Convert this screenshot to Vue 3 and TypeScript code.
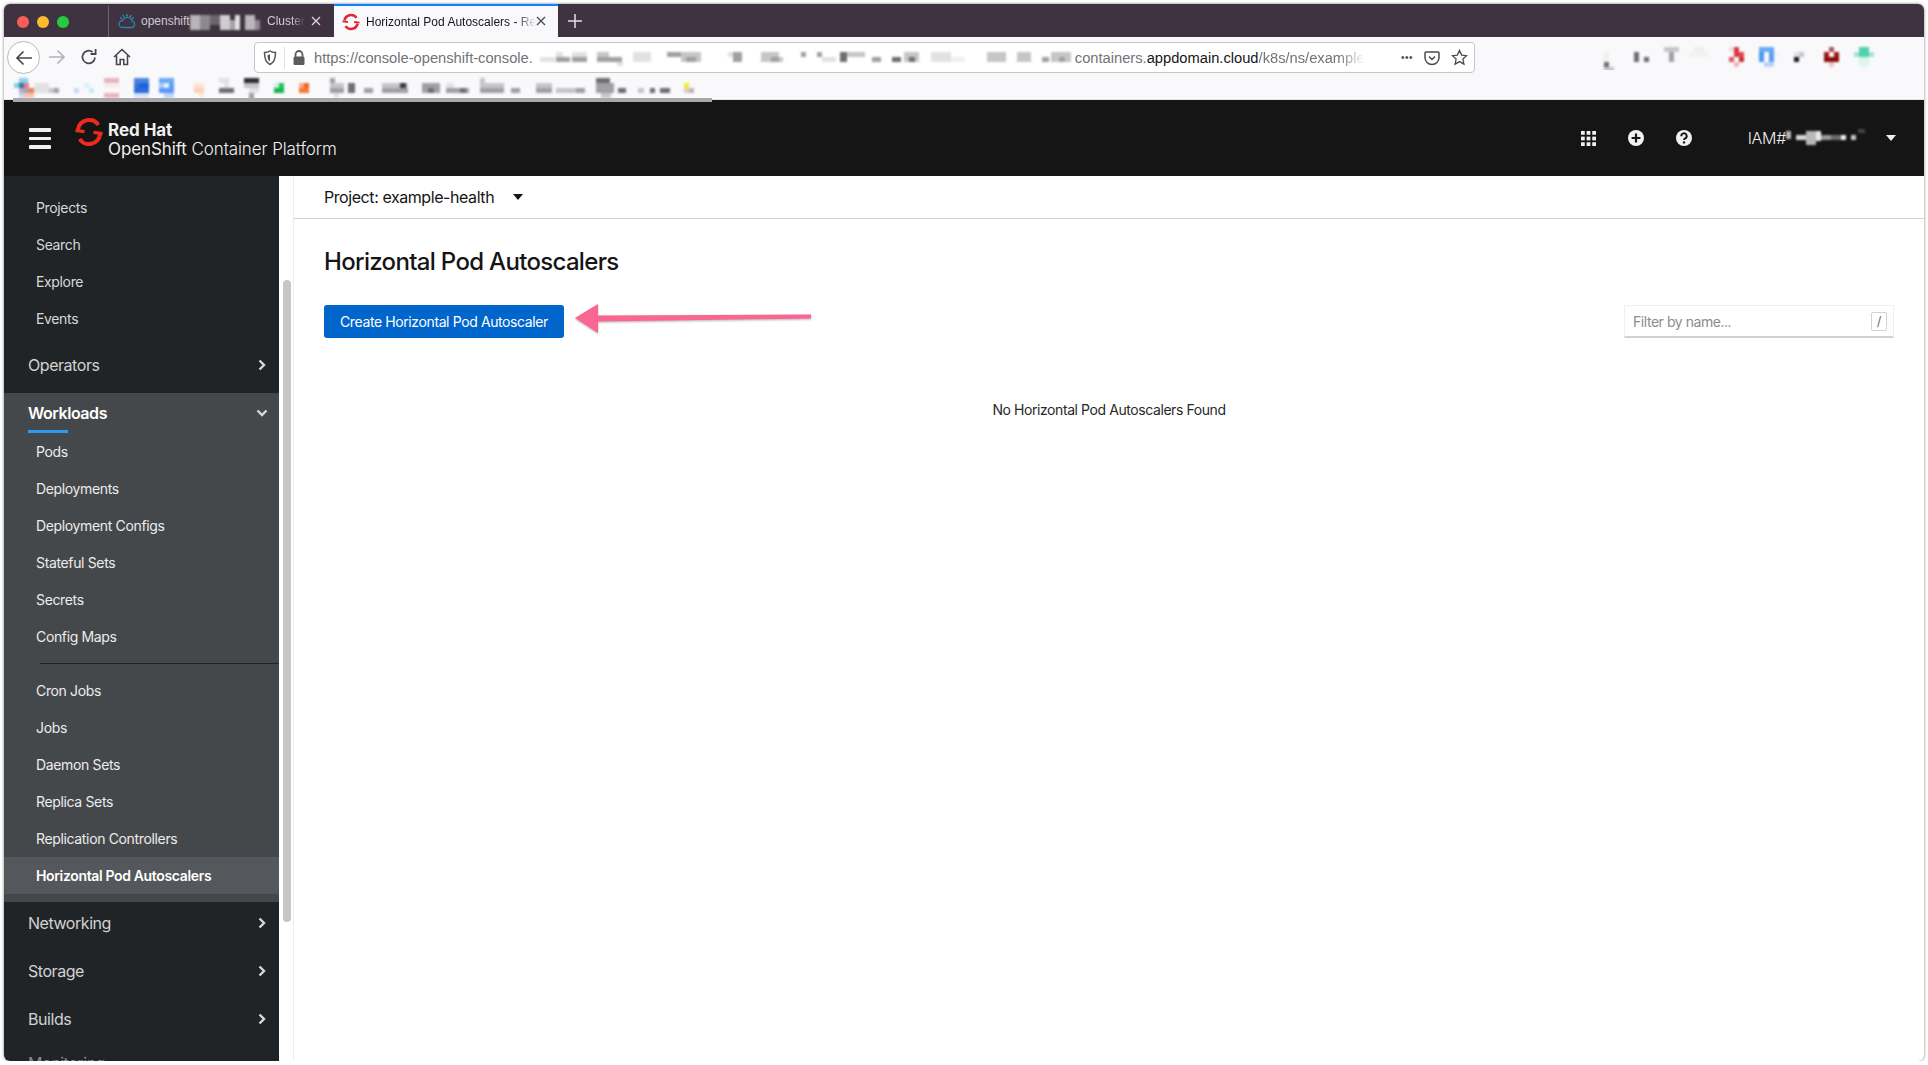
<script setup lang="ts">
type Cell = [number, number, number, number, string]

const topItems = ['Projects', 'Search', 'Explore', 'Events']
const groupOne = ['Pods', 'Deployments', 'Deployment Configs', 'Stateful Sets', 'Secrets', 'Config Maps']
const groupTwo = ['Cron Jobs', 'Jobs', 'Daemon Sets', 'Replica Sets', 'Replication Controllers']
const lowerSections = ['Networking', 'Storage', 'Builds']

const g0 = '#f0f0f1'
const g1 = '#e2e2e4'
const g2 = '#c6c6c8'
const g3 = '#a0a0a3'
const g4 = '#6f6f72'

const bookmarkCells: Cell[] = [
  [19, 78, 9, 5, '#8ccfe8'], [14, 83, 5, 5, '#86cdec'], [19, 83, 5, 5, '#3f7697'], [24, 83, 5, 5, '#e2838f'],
  [19, 88, 5, 5, '#b8a8c4'], [24, 88, 5, 5, '#aca0bc'], [29, 88, 5, 5, '#f0824e'], [19, 93, 5, 5, '#c8dce8'],
  [24, 93, 10, 5, '#f8c4ac'], [34, 83, 15, 5, g1], [34, 88, 15, 5, g1], [49, 88, 5, 5, g2], [54, 88, 5, 5, g3],
  [74, 88, 5, 5, '#c8d8f8'], [84, 83, 5, 5, '#d8f0f8'], [89, 88, 5, 5, '#c8e8f8'],
  [104, 78, 15, 5, '#e6b6be'], [104, 83, 15, 5, '#f8ecec'], [104, 93, 15, 5, '#e6b6be'],
  [134, 78, 15, 5, '#4c82e2'], [134, 83, 5, 5, '#3d74dc'], [139, 83, 10, 5, '#1e62d8'], [134, 88, 15, 5, '#2f6cd8'], [134, 93, 15, 5, '#d8e2f8'],
  [159, 78, 15, 5, '#6aa8f8'], [159, 83, 5, 5, '#a8ccfc'], [164, 83, 5, 5, '#e8f2ff'], [169, 83, 5, 5, '#5a9cf6'],
  [159, 88, 15, 5, '#5898f8'], [164, 93, 10, 5, '#bcd2fc'],
  [194, 83, 10, 5, '#fde4d6'], [194, 88, 10, 5, '#fccfb8'], [199, 93, 5, 5, '#fde8dc'],
  [219, 78, 10, 5, g1], [224, 83, 5, 5, g1], [219, 88, 15, 5, g4], [244, 78, 15, 5, '#2e2e30'],
  [244, 83, 15, 5, g2], [249, 88, 10, 5, g1], [249, 93, 5, 5, g3], [249, 98, 5, 5, g3],
  [274, 83, 5, 5, '#cfeedd'], [279, 83, 5, 5, '#27c060'], [274, 88, 10, 5, '#10b850'],
  [299, 83, 5, 5, '#f8a890'], [304, 83, 5, 5, '#f06030'], [299, 88, 10, 5, '#f67a2c'],
  [330, 78, 5, 5, g3], [330, 83, 14, 5, g2], [330, 88, 14, 5, g3], [334, 93, 5, 5, g1],
  [348, 83, 7, 10, g4], [364, 88, 9, 5, g3], [382, 83, 26, 5, g2], [382, 88, 26, 5, g3], [400, 83, 6, 5, '#3a3a3c'],
  [422, 83, 18, 10, g3], [428, 88, 6, 5, g4], [446, 83, 8, 5, g1], [446, 88, 23, 5, g3], [460, 88, 6, 5, g4],
  [480, 78, 5, 5, g2], [480, 83, 24, 5, g2], [480, 88, 24, 5, g3], [511, 88, 9, 5, g3],
  [536, 83, 16, 5, g2], [536, 88, 16, 5, g3], [556, 88, 20, 5, g2], [576, 88, 9, 5, g3],
  [596, 78, 14, 5, g4], [596, 83, 18, 5, g3], [596, 88, 18, 5, g3], [601, 93, 10, 5, g2],
  [618, 88, 8, 5, g4], [638, 88, 6, 5, g2], [650, 88, 5, 5, g4], [660, 88, 10, 5, g4],
  [684, 83, 5, 5, '#f8ec28'], [684, 88, 5, 5, '#d8d0c8'], [689, 88, 5, 5, '#c0b0c0'],
]

const tabCells: Cell[] = [
  [0, 4, 10, 15, '#b8b4ba'], [10, 4, 10, 15, '#8d8890'], [20, 4, 10, 10, '#6c6570'], [30, 4, 10, 15, '#cfccd0'],
  [40, 9, 5, 10, '#a5a1a7'], [45, 4, 5, 15, '#e2e0e3'], [55, 4, 10, 15, '#bab6bc'], [65, 9, 5, 10, '#8d8890'],
]

const urlCells: Cell[] = [
  [1, 7, 15, 5, g1], [17, 2, 7, 5, g1], [17, 7, 14, 5, g3], [33, 2, 15, 5, g1], [33, 7, 15, 5, g3],
  [58, 2, 12, 5, g2], [58, 7, 25, 5, g3], [78, 12, 6, 4, g1], [94, 2, 18, 10, g1],
  [128, 2, 14, 5, g3], [142, 2, 20, 10, g2], [147, 7, 10, 5, g3],
  [189, 2, 5, 5, g1], [194, 2, 9, 10, g3], [222, 2, 18, 5, g2], [222, 7, 22, 5, g2], [232, 7, 8, 5, g3],
  [262, 2, 5, 5, g3], [278, 2, 5, 5, g3], [283, 7, 14, 5, g1], [301, 2, 7, 10, g4], [308, 2, 18, 5, g2], [333, 7, 9, 5, g3],
  [353, 7, 9, 5, g4], [365, 2, 15, 10, g2], [370, 7, 6, 5, g4], [392, 2, 20, 10, g1], [412, 7, 14, 5, g0],
  [448, 2, 19, 10, g2], [478, 2, 14, 10, g2], [503, 7, 7, 5, g3], [512, 2, 20, 10, g2], [520, 7, 6, 5, g3],
]

const extensionCells: Cell[] = [
  [3, 5, 5, 10, g0], [3, 10, 5, 5, g0], [3, 15, 5, 5, g4], [3, 20, 10, 5, g2],
  [33, 5, 5, 10, g4], [43, 10, 5, 5, g4], [63, 0, 15, 5, g2], [68, 5, 5, 10, g3],
  [93, 0, 10, 5, '#eeeeee'], [88, 5, 20, 5, '#f2f2f2'],
  [128, 0, 5, 5, '#f8dcdc'], [133, 0, 5, 10, '#d63a40'], [138, 5, 5, 5, '#e0484e'], [128, 10, 5, 5, '#d85860'], [138, 10, 5, 5, '#cc2c30'], [133, 15, 5, 5, '#e8b8b8'],
  [158, 0, 15, 5, '#6aa8f8'], [158, 5, 5, 10, '#4d94f4'], [168, 5, 5, 10, '#5c9cf6'], [163, 15, 10, 5, '#bcd2fc'], [173, 5, 5, 5, '#eef4fe'],
  [193, 5, 5, 5, g1], [198, 5, 5, 5, g2], [193, 10, 5, 5, '#1c1c1e'],
  [228, 0, 5, 5, '#a65a5a'], [223, 5, 5, 5, '#a01818'], [233, 5, 5, 5, '#a01818'], [223, 10, 15, 5, '#8c0f0f'], [228, 15, 5, 5, '#e8c8c8'],
  [258, 0, 10, 5, '#52d0ae'], [253, 5, 5, 5, '#a6e4d2'], [258, 5, 10, 5, '#52d0ae'], [268, 5, 5, 5, '#a6e4d2'], [258, 10, 10, 10, '#e0f4ee'],
]

const userCells: Cell[] = [
  [0, 2, 5, 8, '#b8b8b8'], [10, 6, 10, 5, '#d8d8d8'], [20, 2, 10, 14, '#b8b8b8'], [30, 2, 5, 10, '#e8e8e8'],
  [35, 6, 10, 5, '#9a9a9a'], [45, 6, 10, 5, '#6c6c6c'], [55, 6, 5, 5, '#f0f0f0'], [65, 6, 5, 5, '#c8c8c8'], [72, 0, 7, 4, '#444444'],
]
</script>

<template>
  <div class="window">
    <header class="tabbar">
      <div class="lights">
        <span class="light red"></span>
        <span class="light amber"></span>
        <span class="light green"></span>
      </div>
      <div class="tab idle">
        <svg class="cloud" viewBox="0 0 18 16" width="18" height="16" fill="none" stroke="#2f7fa8" stroke-width="1.3">
          <path d="M4.5 14.5h9a3.2 3.2 0 0 0 .6-6.3A5 5 0 0 0 4.6 7.5 3.5 3.5 0 0 0 4.5 14.5z" />
          <path d="M9 1v2.5M5 2l1 2M13 2l-1 2M2.5 4.5l1.3 1.2M15.5 4.5l-1.3 1.2" stroke="#3f95c0" />
        </svg>
        <span class="tab-text idle-text">openshift</span>
        <svg class="mosaic tab-mosaic" width="72" height="20" viewBox="0 0 72 20">
          <rect v-for="(c, i) in tabCells" :key="i" :x="c[0]" :y="c[1]" :width="c[2]" :height="c[3]" :fill="c[4]" />
        </svg>
        <span class="tab-text idle-text cluster">Cluster</span>
        <svg class="close" viewBox="0 0 12 12" width="12" height="12" stroke="#d8d4da" stroke-width="1.3"><path d="M2 2l8 8M10 2l-8 8" /></svg>
      </div>
      <div class="tab active">
        <svg class="favicon" viewBox="0 0 20 20" width="18" height="18" fill="none" stroke="#e1262d" stroke-width="2.8">
          <path d="M2.600 8.200A7.600 7.600 0 0 1 16.200 5.400" />
          <path d="M17.400 11.800A7.600 7.600 0 0 1 3.800 14.600" />
          <path d="M0.500 9.300l6 .8M19.500 10.700l-6-.8" stroke-width="2.200" />
        </svg>
        <span class="tab-text active-text">Horizontal Pod Autoscalers - Re</span>
        <svg class="close" viewBox="0 0 12 12" width="12" height="12" stroke="#4a4a4f" stroke-width="1.3"><path d="M2 2l8 8M10 2l-8 8" /></svg>
      </div>
      <svg class="newtab" viewBox="0 0 14 14" width="14" height="14" stroke="#e4e0e6" stroke-width="1.5"><path d="M7 0v14M0 7h14" /></svg>
    </header>

    <div class="toolbar">
      <div class="back">
        <svg viewBox="0 0 18 18" width="18" height="18" fill="none" stroke="#48484c" stroke-width="1.7"><path d="M17 9H2M8.5 2.5L2 9l6.5 6.5" /></svg>
      </div>
      <svg class="tool forward" viewBox="0 0 18 18" width="18" height="18" fill="none" stroke="#b4b4b8" stroke-width="1.7"><path d="M1 9h15M9.5 2.5L16 9l-6.5 6.5" /></svg>
      <svg class="tool reload" viewBox="0 0 18 18" width="18" height="18" fill="none" stroke="#48484c" stroke-width="1.8"><path d="M15 9.5A6.3 6.3 0 1 1 12.6 4" /><path d="M15.6 1v5h-5" /></svg>
      <svg class="tool home" viewBox="0 0 18 18" width="18" height="18" fill="none" stroke="#48484c" stroke-width="1.6"><path d="M1 9l8-7.5L17 9M3.5 7.5V16.5H7.2V11.5h3.6v5h3.7V7.5" /></svg>
      <div class="urlbar">
        <svg viewBox="0 0 14 16" width="14" height="16" fill="none" stroke="#55555a" stroke-width="1.5"><path d="M1.5 2.5C4 2.5 5.5 2 7 1c1.5 1 3 1.5 5.5 1.5 0 6-1 10-5.500 12C2.500 12.500 1.500 8.500 1.500 2.500z" /><path d="M4.500 5c1 0 1.800-.3 2.500-.8v7.300C5 10.500 4.500 8 4.500 5z" fill="#55555a" stroke="none" /></svg>
        <span class="url-sep"></span>
        <svg viewBox="0 0 14 16" width="14" height="16"><path d="M3.500 7V4.500a3.500 3.500 0 0 1 7 0V7" fill="none" stroke="#5c5c60" stroke-width="1.800" /><rect x="1.500" y="6.500" width="11" height="8.500" rx="1.500" fill="#5c5c60" /></svg>
        <span class="url-a url-start">https://console-openshift-console.</span>
        <svg class="mosaic url-mosaic" width="536" height="16" viewBox="0 0 536 16">
          <rect v-for="(c, i) in urlCells" :key="i" :x="c[0]" :y="c[1]" :width="c[2]" :height="c[3]" :fill="c[4]" />
        </svg>
        <span class="url-a">containers.</span><span class="url-b">appdomain.cloud</span><span class="url-a fade">/k8s/ns/example</span>
        <span class="dots">•••</span>
        <svg class="pocket" viewBox="0 0 16 16" width="16" height="16" fill="none" stroke="#4c4c50" stroke-width="1.500"><path d="M2 2h12a1 1 0 0 1 1 1v4.500a7 7 0 0 1-14 0V3a1 1 0 0 1 1-1z" /><path d="M5 6.500l3 3 3-3" /></svg>
        <svg class="star" viewBox="0 0 18 18" width="17" height="17" fill="none" stroke="#4c4c50" stroke-width="1.400"><path d="M9 1.500l2.300 5 5.200.6-3.900 3.600 1.100 5.300L9 13.300 4.300 16l1.100-5.300L1.500 7.100l5.200-.6z" /></svg>
      </div>
      <svg class="mosaic extensions" width="275" height="26" viewBox="0 0 275 26">
        <rect v-for="(c, i) in extensionCells" :key="i" :x="c[0]" :y="c[1]" :width="c[2]" :height="c[3]" :fill="c[4]" />
      </svg>
    </div>

    <div class="bookmarks">
      <svg class="mosaic bm" width="712" height="32" viewBox="0 68 712 32">
        <rect v-for="(c, i) in bookmarkCells" :key="i" :x="c[0]" :y="c[1]" :width="c[2]" :height="c[3]" :fill="c[4]" />
      </svg>
      <span class="bm-rule"></span>
    </div>

    <div class="masthead">
      <span class="burger"><i></i><i></i><i></i></span>
      <svg class="logo" viewBox="0 0 28 28" width="28" height="28" fill="none" stroke="#ee2a1f" stroke-width="4">
        <path d="M3 11.500A11.200 11.200 0 0 1 23.400 7" />
        <path d="M25 16.500A11.200 11.200 0 0 1 4.600 21" />
        <path d="M0.500 12.300l9 1.300M27.500 15.700l-9-1.300" stroke-width="3.200" />
      </svg>
      <div class="brand">
        <div class="brand-top">Red Hat</div>
        <div class="brand-bottom"><b>OpenShift</b> Container Platform</div>
      </div>
      <div class="mast-right">
        <svg viewBox="0 0 16 16" width="15" height="15" fill="#f0f0f0">
          <rect x="0" y="0" width="4" height="4" /><rect x="6" y="0" width="4" height="4" /><rect x="12" y="0" width="4" height="4" />
          <rect x="0" y="6" width="4" height="4" /><rect x="6" y="6" width="4" height="4" /><rect x="12" y="6" width="4" height="4" />
          <rect x="0" y="12" width="4" height="4" /><rect x="6" y="12" width="4" height="4" /><rect x="12" y="12" width="4" height="4" />
        </svg>
        <svg viewBox="0 0 16 16" width="16" height="16"><circle cx="8" cy="8" r="8" fill="#f0f0f0" /><path d="M8 3.600v8.800M3.600 8h8.800" stroke="#151515" stroke-width="2.200" /></svg>
        <svg viewBox="0 0 16 16" width="16" height="16"><circle cx="8" cy="8" r="8" fill="#f0f0f0" /><path d="M5.300 6.200A2.700 2.700 0 1 1 9 8.500c-.7.400-1 .8-1 1.600" fill="none" stroke="#151515" stroke-width="1.900" /><circle cx="8" cy="12.400" r="1.200" fill="#151515" /></svg>
        <div class="user">
          <span>IAM#</span>
          <svg class="mosaic" width="80" height="18" viewBox="0 0 80 18">
            <rect v-for="(c, i) in userCells" :key="i" :x="c[0]" :y="c[1]" :width="c[2]" :height="c[3]" :fill="c[4]" />
          </svg>
        </div>
        <span class="caret light-caret"></span>
      </div>
    </div>

    <div class="body">
      <nav class="sidebar">
        <div class="top-list">
          <a v-for="item in topItems" :key="item" class="sub">{{ item }}</a>
        </div>
        <div class="section operators">
          <span>Operators</span>
          <svg class="chev" viewBox="0 0 10 12" width="10" height="12" fill="none" stroke="currentColor" stroke-width="2.400"><path d="M2.500 1.500L7 6l-4.500 4.500" /></svg>
        </div>
        <div class="group">
          <div class="group-head">
            <span class="group-title">Workloads</span>
            <svg class="chev down" viewBox="0 0 12 10" width="12" height="10" fill="none" stroke="currentColor" stroke-width="2.400"><path d="M1.500 2.500L6 7l4.500-4.500" /></svg>
          </div>
          <a v-for="item in groupOne" :key="item" class="sub">{{ item }}</a>
          <div class="divider"></div>
          <a v-for="item in groupTwo" :key="item" class="sub">{{ item }}</a>
          <a class="sub current">Horizontal Pod Autoscalers</a>
        </div>
        <div v-for="s in lowerSections" :key="s" class="section lower">
          <span>{{ s }}</span>
          <svg class="chev" viewBox="0 0 10 12" width="10" height="12" fill="none" stroke="currentColor" stroke-width="2.400"><path d="M2.500 1.500L7 6l-4.500 4.500" /></svg>
        </div>
        <div class="section clipped"><span>Monitoring</span></div>
      </nav>
      <div class="scroll-track"><div class="scroll-thumb"></div></div>

      <main class="main">
        <div class="project-bar">
          <span>Project: example-health</span>
          <span class="caret dark-caret"></span>
        </div>
        <div class="page">
          <h1>Horizontal Pod Autoscalers</h1>
          <div class="actions">
            <button class="create" type="button">Create Horizontal Pod Autoscaler</button>
            <svg class="arrow" viewBox="0 0 244 36" width="244" height="36">
              <path d="M2 15L25 1v11.500L238 11.500v4L25 18.500V30z" fill="#fa6592" />
            </svg>
            <div class="filter">
              <span class="placeholder">Filter by name...</span>
              <span class="slash">/</span>
            </div>
          </div>
          <p class="empty">No Horizontal Pod Autoscalers Found</p>
        </div>
      </main>
    </div>
  </div>
</template>

<style scoped>
.window {
  width: 1920px;
  height: 1057px;
  margin: 4px 4px 0;
  display: flex;
  flex-direction: column;
  border-radius: 6px;
  overflow: hidden;
  background: #fff;
  box-shadow: 0 0 3px rgba(0, 0, 0, 0.55);
  font-family: Inter, "Noto Sans", sans-serif;
}
.mosaic {
  display: block;
  flex: none;
  filter: blur(0.8px);
}
.tabbar {
  height: 33px;
  flex: none;
  display: flex;
  align-items: stretch;
  background: #3f3341;
  font-family: "Liberation Sans", Arial, sans-serif;
}
.lights {
  width: 105px;
  display: flex;
  align-items: center;
  gap: 8px;
  padding-left: 13px;
  box-sizing: border-box;
  border-right: 1px solid #6d6370;
  margin: 2px 0 0;
  flex: none;
}
.light {
  width: 12px;
  height: 12px;
  border-radius: 50%;
}
.red { background: #fc5c57; }
.amber { background: #fdbc2e; }
.green { background: #28c940; }
.tab {
  width: 224px;
  flex: none;
  display: flex;
  align-items: center;
  box-sizing: border-box;
  position: relative;
  padding-left: 9px;
  font-size: 12px;
}
.tab.idle { width: 225px; }
.tab-text { white-space: nowrap; }
.idle-text { color: #cfcbd1; margin-left: 5px; }
.tab-mosaic { margin-left: 0; }
.cluster {
  position: absolute;
  left: 158px;
  margin: 0;
  -webkit-mask-image: linear-gradient(to right, #000 65%, transparent);
  mask-image: linear-gradient(to right, #000 65%, transparent);
}
.idle .close { position: absolute; left: 201px; top: 11px; }
.tab.active {
  background: #f9f9fb;
  border-top: 2px solid #0a84ff;
  padding-left: 8px;
}
.active-text {
  color: #17171a;
  margin-left: 6px;
  -webkit-mask-image: linear-gradient(to right, #000 88%, transparent);
  mask-image: linear-gradient(to right, #000 88%, transparent);
}
.active .close { position: absolute; left: 201px; top: 9px; }
.newtab { align-self: center; margin-left: 10px; }
.toolbar {
  height: 33px;
  flex: none;
  display: flex;
  align-items: center;
  background: #f9f9fb;
  position: relative;
  padding-left: 3px;
}
.back {
  width: 33px;
  height: 33px;
  margin-top: 8px;
  border: 1px solid #b8b8bc;
  border-radius: 50%;
  background: #fff;
  display: flex;
  align-items: center;
  justify-content: center;
  box-sizing: border-box;
  flex: none;
  z-index: 1;
}
.tool { flex: none; margin-top: 6px; }
.forward { margin-left: 8px; }
.reload { margin-left: 14px; }
.home { margin-left: 15px; }
.urlbar {
  position: absolute;
  left: 250px;
  top: 5px;
  width: 1221px;
  height: 31px;
  box-sizing: border-box;
  border: 1px solid #c6c6ca;
  border-radius: 4px;
  background: #fff;
  display: flex;
  align-items: center;
  padding-left: 8px;
  font-family: "Liberation Sans", Arial, sans-serif;
  font-size: 14.700px;
  white-space: nowrap;
  z-index: 2;
}
.url-sep {
  width: 1px;
  height: 22px;
  background: #dedee2;
  margin: 0 7px;
}
.url-a { color: #737377; }
.url-start { margin-left: 8px; }
.url-b { color: #17171a; }
.fade {
  -webkit-mask-image: linear-gradient(to right, #000 75%, transparent);
  mask-image: linear-gradient(to right, #000 75%, transparent);
}
.url-mosaic { margin: 0 0 0 6px; }
.dots { margin-left: auto; color: #4c4c50; font-size: 10px; letter-spacing: 0.500px; }
.pocket { margin-left: 11px; }
.star { margin: 0 6px 0 11px; }
.extensions { position: absolute; left: 1597px; top: 10px; }
.bookmarks {
  height: 30px;
  flex: none;
  background: #f9f9fb;
  position: relative;
  border-bottom: 1px solid #e4e4e6;
  box-sizing: border-box;
}
.bm { position: absolute; left: -4px; top: -2px; z-index: 1; }
.bm-rule {
  position: absolute;
  left: 9px;
  width: 699px;
  bottom: -3px;
  height: 4px;
  background: #a9a9ab;
  z-index: 2;
}
.masthead {
  height: 76px;
  flex: none;
  background: #151515;
  display: flex;
  align-items: center;
  color: #f0f0f0;
  position: relative;
}
.burger {
  width: 22px;
  display: flex;
  flex-direction: column;
  gap: 5px;
  margin-left: 25px;
  margin-top: 1px;
}
.burger i {
  display: block;
  height: 3.500px;
  border-radius: 1px;
  background: #f0f0f0;
}
.logo { margin-left: 24px; margin-top: -12px; flex: none; }
.brand { margin-left: 5px; margin-top: 2px; }
.brand-top {
  font-weight: 700;
  font-size: 17px;
  letter-spacing: -0.050px;
  line-height: 19px;
}
.brand-bottom {
  font-size: 17px;
  line-height: 18px;
  font-weight: 300;
  letter-spacing: -0.100px;
  white-space: nowrap;
}
.brand-bottom b { font-weight: 400; }
.mast-right {
  margin-left: auto;
  display: flex;
  align-items: center;
  gap: 32px;
  padding-right: 28px;
}
.user {
  display: flex;
  align-items: center;
  margin-left: 24px;
  font-size: 16px;
  font-weight: 300;
  letter-spacing: -0.300px;
}
.caret {
  width: 0;
  height: 0;
  border-style: solid;
  border-width: 6px 5.500px 0;
  border-color: transparent;
}
.light-caret { border-top-color: #f0f0f0; margin-left: -12px; }
.dark-caret { border-top-color: #151515; margin-left: 19px; }
.body {
  flex: 1;
  min-height: 0;
  display: flex;
}
.sidebar {
  width: 275px;
  flex: none;
  background: #212427;
  color: #d2d2d2;
  overflow: hidden;
}
.top-list { padding-top: 13px; }
.sub {
  display: flex;
  align-items: center;
  height: 37px;
  padding-left: 32px;
  font-size: 14px;
  letter-spacing: -0.350px;
  color: #d8d8d8;
}
.section {
  display: flex;
  align-items: center;
  justify-content: space-between;
  height: 48px;
  padding: 0 12px 0 24px;
  font-size: 16px;
  letter-spacing: -0.450px;
  color: #d2d2d2;
  box-sizing: border-box;
}
.operators { margin-top: 4px; margin-bottom: 4px; }
.chev { color: #d8d8d8; flex: none; }
.group {
  background: #45484b;
  padding-bottom: 8px;
}
.group-head {
  height: 40px;
  display: flex;
  align-items: flex-start;
  justify-content: space-between;
  padding: 0 11px 0 24px;
  color: #fff;
  font-weight: 600;
  font-size: 16px;
  letter-spacing: -0.450px;
  box-sizing: border-box;
}
.group-title {
  height: 40px;
  line-height: 41px;
  position: relative;
}
.group-title::after {
  content: "";
  position: absolute;
  left: 0;
  bottom: 0;
  width: 40px;
  height: 3px;
  background: #2b9af3;
}
.down { margin-top: 15px; }
.divider {
  height: 1px;
  margin: 8px 0 8px 36px;
  background: #212427;
}
.group .sub { color: #ececec; }
.current {
  background: #54575b;
  color: #fff !important;
  font-weight: 600;
}
.group + .lower { height: 45px; padding-bottom: 3px; }
.clipped { color: #8a8d90; margin-top: -4px; }
.scroll-track {
  width: 14px;
  flex: none;
  background: #fff;
  box-sizing: border-box;
  padding-left: 4px;
}
.scroll-thumb {
  width: 8px;
  height: 642px;
  margin-top: 104px;
  border-radius: 4px;
  background: #c6c6c6;
}
.main {
  flex: 1;
  min-width: 0;
  border-left: 1px solid #ededed;
  color: #151515;
}
.project-bar {
  height: 43px;
  box-sizing: border-box;
  border-bottom: 1px solid #d2d2d2;
  display: flex;
  align-items: center;
  padding-left: 30px;
  font-size: 16px;
  letter-spacing: -0.430px;
}
.page {
  padding: 0 30px;
}
h1 {
  margin: 25px 0 0;
  font-size: 24px;
  line-height: 36px;
  font-weight: 500;
  letter-spacing: -0.680px;
}
.actions {
  display: flex;
  align-items: flex-start;
  height: 33px;
  margin-top: 25px;
}
.create {
  width: 240px;
  height: 33px;
  padding: 0;
  border: 0;
  border-radius: 3px;
  background: #06c;
  color: #fff;
  font-family: inherit;
  font-size: 14px;
  letter-spacing: -0.390px;
}
.arrow {
  margin-left: 9px;
  margin-top: -2px;
  flex: none;
  filter: drop-shadow(0 1px 1px rgba(0, 0, 0, 0.3));
}
.filter {
  margin-left: auto;
  width: 270px;
  height: 33px;
  box-sizing: border-box;
  border: 1px solid #f0f0f0;
  border-bottom: 2px solid #d2d2d2;
  display: flex;
  align-items: center;
  justify-content: space-between;
  padding: 0 6px 0 8px;
  font-size: 14px;
}
.placeholder { color: #8a8d90; letter-spacing: -0.450px; }
.slash {
  width: 16px;
  height: 19px;
  box-sizing: border-box;
  border: 1px solid #d2d2d2;
  border-radius: 2px;
  display: flex;
  align-items: center;
  justify-content: center;
  font-size: 13px;
  color: #6a6e73;
}
.empty {
  margin: 62px 0 0;
  text-align: center;
  font-size: 14px;
  line-height: 20px;
  letter-spacing: -0.420px;
  color: #292929;
}
</style>

<style>
html,
body {
  margin: 0;
  background: #fff;
  overflow: hidden;
}
</style>
